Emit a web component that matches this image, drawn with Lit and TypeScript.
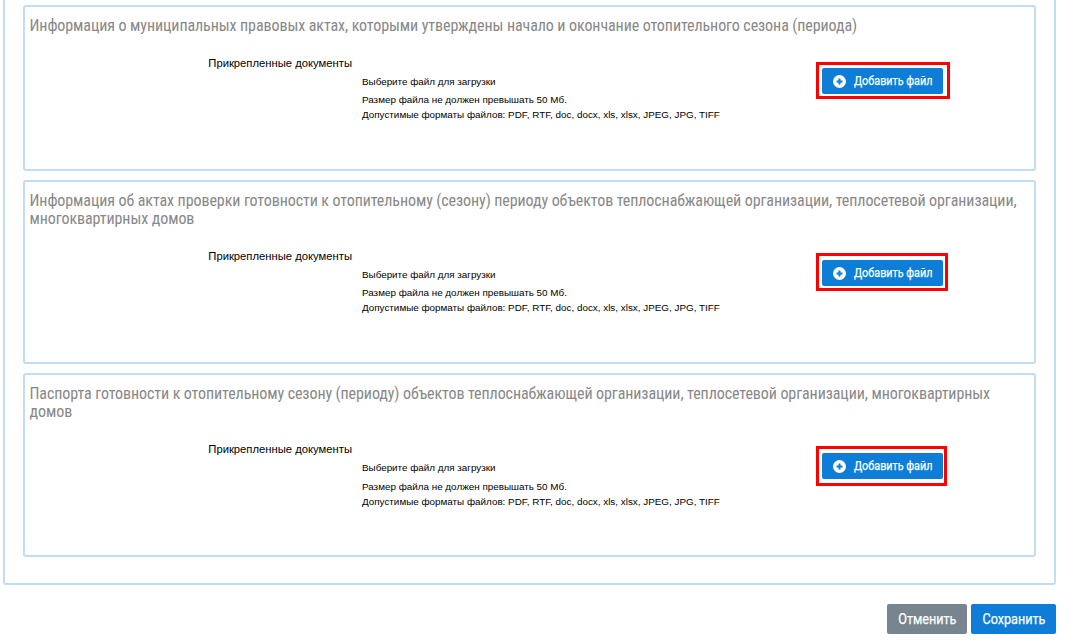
import { LitElement, html, css } from "lit";
import { customElement } from "lit/decorators.js";

const sections = [
  { title: "Информация о муниципальных правовых актах, которыми утверждены начало и окончание отопительного сезона (периода)", cls: "s1" },
  { title: "Информация об актах проверки готовности к отопительному (сезону) периоду объектов теплоснабжающей организации, теплосетевой организации, многоквартирных домов", cls: "s2" },
  { title: "Паспорта готовности к отопительному сезону (периоду) объектов теплоснабжающей организации, теплосетевой организации, многоквартирных домов", cls: "s3" },
];

@customElement("app-root")
export class AppRoot extends LitElement {
  static styles = css`
    :host { display: block; width: 1077px; height: 644px; overflow: hidden; background: #fff; font-family: "Liberation Sans", Arial, sans-serif; color: #000; }
    .outer { box-sizing: border-box; margin-left: 3px; width: 1053px; height: 585px; border: 2px solid #c1dcf3; border-top: none; border-radius: 0 0 3px 3px; padding: 5px 18px 0 18px; display: flex; flex-direction: column; gap: 9px; }
    .sec { box-sizing: border-box; border: 2px solid #c1dcf3; border-radius: 3px; padding: 10px 5px 0 5px; }
    .s1 { height: 166px; }
    .s2, .s3 { height: 184px; }
    h3 { margin: 0 0 0 -0.5px; font-family: "Liberation Sans Narrow", "Roboto Condensed", Roboto, sans-serif; font-weight: 400; font-size: 16px; line-height: 18px; letter-spacing: -0.085px; color: #888; }
    .row { display: flex; align-items: flex-start; margin-top: 21px; }
    .label { width: 322px; text-align: right; font-size: 11.25px; line-height: 14px; flex: none; }
    .info { margin-left: 10px; padding-top: 19px; width: 458px; flex: none; }
    .choose { font-size: 9.85px; line-height: 14px; }
    .hint { font-size: 9.87px; line-height: 15px; }
    .s1 .hint.first { margin-top: 3px; }
    .s2 .hint.first { margin-top: 3px; }
    .s3 .hint.first { margin-top: 4px; }
    .mark { box-sizing: border-box; border: 3px solid #f00; margin-left: -4px; flex: none; }
    .s1 .mark { margin-top: 6px; padding: 3px 4px 2px 3px; }
    .s2 .mark { margin-top: 4px; padding: 4px 2px 2px 3px; }
    .s3 .mark { margin-top: 4px; padding: 4px 1px 4px 3px; }
    .btn { display: flex; align-items: center; gap: 8px; box-sizing: border-box; width: 121px; height: 26px; padding-left: 11px; background: #0d7dd7; border-radius: 2px; color: #fff; font-family: "Liberation Sans Narrow", Roboto, sans-serif; font-size: 12px; font-weight: 400; -webkit-text-stroke: 0.25px #fff; }
    .btn svg { flex: none; }
    .btn span { display: inline-block; transform: scaleX(0.9); transform-origin: left center; white-space: nowrap; }
    .footer { display: flex; justify-content: flex-end; gap: 4px; width: 1056px; margin-top: 19px; }
    .fb { box-sizing: border-box; height: 30px; border-radius: 2px; color: #fff; font-family: "Liberation Sans Narrow", Roboto, sans-serif; font-size: 14px; font-weight: 400; -webkit-text-stroke: 0.25px #fff; display: flex; align-items: center; justify-content: center; }
    .fb span { display: inline-block; transform: scaleX(0.9); }
    .cancel { width: 80px; background: #78858f; }
    .save { width: 85px; background: #0d7dd7; }
  `;

  render() {
    return html`
      <div class="outer">
        ${sections.map((s) => html`
          <section class="sec ${s.cls}">
            <h3>${s.title}</h3>
            <div class="row">
              <div class="label">Прикрепленные документы</div>
              <div class="info">
                <div class="choose">Выберите файл для загрузки</div>
                <div class="hint first">Размер файла не должен превышать 50 Мб.</div>
                <div class="hint">Допустимые форматы файлов: PDF, RTF, doc, docx, xls, xlsx, JPEG, JPG, TIFF</div>
              </div>
              <div class="mark">
                <div class="btn">
                  <svg width="13" height="13" viewBox="0 0 13 13"><circle cx="6.5" cy="6.5" r="6.5" fill="#fff"/><path d="M6.5 3.5v6M3.5 6.5h6" stroke="#0d7dd7" stroke-width="2"/></svg>
                  <span>Добавить файл</span>
                </div>
              </div>
            </div>
          </section>
        `)}
      </div>
      <div class="footer">
        <div class="fb cancel"><span>Отменить</span></div>
        <div class="fb save"><span>Сохранить</span></div>
      </div>
    `;
  }
}
